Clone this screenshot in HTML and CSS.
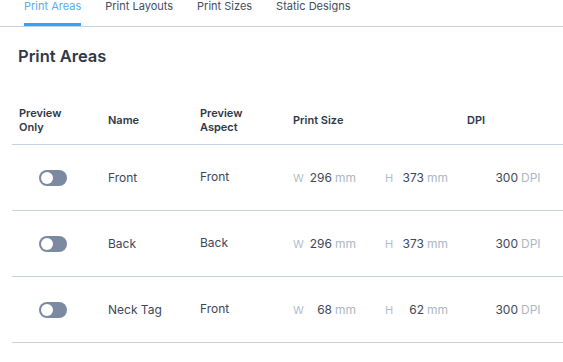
FILE: index.html
```html
<!DOCTYPE html>
<html lang="en">
<head>
    <meta charset="UTF-8">
    <title>Print Areas</title>
    <link rel="stylesheet" href="styles.css">
</head>
<body>
    <nav class="tabs">
        <a class="tab active">Print Areas</a>
        <a class="tab">Print Layouts</a>
        <a class="tab">Print Sizes</a>
        <a class="tab">Static Designs</a>
    </nav>

    <section class="panel">
        <h2 class="panel-title">Print Areas</h2>

        <div class="table">
            <div class="row head">
                <div class="cell">Preview<br>Only</div>
                <div class="cell">Name</div>
                <div class="cell">Preview<br>Aspect</div>
                <div class="cell">Print Size</div>
                <div class="cell">DPI</div>
            </div>

            <div class="row">
                <div class="cell"><span class="toggle"></span></div>
                <div class="cell">Front</div>
                <div class="cell aspect">Front</div>
                <div class="cell size">
                    <span class="dim"><span class="dim-label">W</span><span class="num">296</span><span class="unit">mm</span></span>
                    <span class="dim"><span class="dim-label">H</span><span class="num">373</span><span class="unit">mm</span></span>
                </div>
                <div class="cell dpi"><span class="num-dpi">300</span><span class="unit">DPI</span></div>
            </div>

            <div class="row">
                <div class="cell"><span class="toggle"></span></div>
                <div class="cell">Back</div>
                <div class="cell aspect">Back</div>
                <div class="cell size">
                    <span class="dim"><span class="dim-label">W</span><span class="num">296</span><span class="unit">mm</span></span>
                    <span class="dim"><span class="dim-label">H</span><span class="num">373</span><span class="unit">mm</span></span>
                </div>
                <div class="cell dpi"><span class="num-dpi">300</span><span class="unit">DPI</span></div>
            </div>

            <div class="row">
                <div class="cell"><span class="toggle"></span></div>
                <div class="cell">Neck Tag</div>
                <div class="cell aspect">Front</div>
                <div class="cell size">
                    <span class="dim"><span class="dim-label">W</span><span class="num">68</span><span class="unit">mm</span></span>
                    <span class="dim"><span class="dim-label">H</span><span class="num">62</span><span class="unit">mm</span></span>
                </div>
                <div class="cell dpi"><span class="num-dpi">300</span><span class="unit">DPI</span></div>
            </div>
        </div>
    </section>
</body>
</html>
```

FILE: styles.css
```css
* {
    margin: 0;
    padding: 0;
    box-sizing: border-box;
}

body {
    font-family: Inter, "Noto Sans", sans-serif;
    background-color: white;
    color: #3d4758;
    overflow: hidden;
}

.tabs {
    display: flex;
    gap: 24px;
    padding-left: 24px;
    margin-top: -1px;
    border-bottom: 1px solid #c5d3e0;
}

.tab {
    font-size: 11px;
    line-height: 15px;
    color: #434d5e;
    padding-bottom: 9px;
    border-bottom: 3px solid transparent;
}

.tab.active {
    color: #5ea9ef;
    border-bottom-color: #38a1f7;
}

.panel {
    padding: 0 0 0 12px;
}

.panel-title {
    font-size: 16.5px;
    font-weight: 600;
    color: #2f3848;
    margin: 18px 0 0 6px;
    line-height: 22px;
}

.table {
    margin-top: 28px;
    width: 551px;
}

.row {
    display: grid;
    grid-template-columns: 89px 92px 93px 174px 103px;
    align-items: center;
    height: 66px;
    border-bottom: 1px solid #c5d3e0;
    font-size: 12px;
}

.row.head {
    height: 50px;
    font-size: 11px;
    font-weight: 600;
    line-height: 14px;
    color: #2f3848;
}

.cell {
    padding-left: 7px;
}

.aspect {
    margin-top: -2px;
}

.toggle {
    display: block;
    position: relative;
    width: 28px;
    height: 16px;
    margin-left: 20px;
    border-radius: 8px;
    background-color: #7b8aa1;
}

.toggle::after {
    content: "";
    position: absolute;
    left: 2px;
    top: 2px;
    width: 12px;
    height: 12px;
    border-radius: 50%;
    background-color: white;
}

.size {
    display: flex;
}

.dim {
    display: flex;
    flex-shrink: 0;
    width: 92px;
    align-items: baseline;
}

.dim-label {
    width: 13px;
    color: #b3bdc9;
    font-size: 11px;
}

.num {
    width: 26px;
    text-align: right;
}

.unit {
    margin-left: 3px;
    color: #adb7c3;
}

.dpi {
    display: flex;
    align-items: baseline;
}

.num-dpi {
    width: 51px;
    text-align: right;
}
```
